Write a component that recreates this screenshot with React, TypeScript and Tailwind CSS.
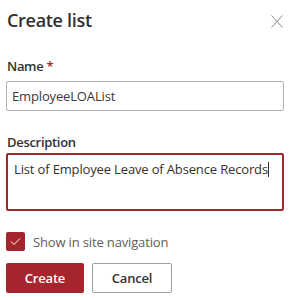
import React from "react";

export default function App() {
  return (
    <div
      className="w-[300px] h-[300px] bg-white overflow-hidden pl-[6px] pr-[17px]"
      style={{ fontFamily: '"Open Sans", "Noto Sans", sans-serif' }}
    >
      <div className="flex items-start justify-between pt-[8px]">
        <h1 className="text-[18px] leading-[24px] font-semibold text-[#323130] pl-[1px] tracking-[-0.3px]">
          Create list
        </h1>
        <svg
          className="mt-[7px]"
          width="12"
          height="13"
          viewBox="0 0 12 13"
          fill="none"
          stroke="#8a8886"
          strokeWidth="1"
        >
          <path d="M0.5 0.5 L11.5 12.5 M11.5 0.5 L0.5 12.5" />
        </svg>
      </div>

      <div className="mt-[25px] text-[13px] leading-[18px] font-semibold text-[#323130] pl-[1px] tracking-[-0.3px]">
        Name <span className="text-[#a4262c]">*</span>
      </div>
      <div className="mt-[6px] h-[30px] w-[278px] border border-[#b3b0ad] rounded-[2px] flex items-center px-[5px] text-[13px] leading-[18px] tracking-[-0.15px] text-[#3b3a39]">
        EmployeeLOAList
      </div>

      <div className="mt-[22px] text-[13px] leading-[18px] font-semibold text-[#323130] pl-[1px] tracking-[-0.3px]">
        Description
      </div>
      <div className="mt-[2px] h-[58px] w-[278px] border-2 border-[#a4262c] rounded-[2px] px-[6px] pt-[5px] text-[13px] leading-[18px] tracking-[-0.15px] text-[#323130] whitespace-nowrap">
        List of Employee Leave of Absence Records
        <span className="inline-block w-[1px] h-[15px] bg-[#323130] align-[-3px]" />
      </div>

      <div className="mt-[21px] flex items-center gap-[8px]">
        <div className="w-[19px] h-[19px] rounded-[2px] bg-[#a4262c] flex items-center justify-center">
          <svg width="11" height="9" viewBox="0 0 11 9" fill="none" stroke="white" strokeWidth="1">
            <path d="M1 4.5 L4 7.5 L10 1.5" />
          </svg>
        </div>
        <span className="text-[13px] leading-[18px] tracking-[-0.15px] text-[#605e5c]">
          Show in site navigation
        </span>
      </div>

      <div className="mt-[12px] flex gap-[8px]">
        <button className="h-[30px] w-[78px] rounded-[2px] bg-[#a4262c] text-white text-[13px] leading-[18px] tracking-[-0.2px] font-semibold">
          Create
        </button>
        <button className="h-[30px] w-[80px] rounded-[2px] border border-[#a19f9d] bg-white text-[#323130] text-[13px] leading-[18px] tracking-[-0.2px] font-semibold">
          Cancel
        </button>
      </div>
    </div>
  );
}
